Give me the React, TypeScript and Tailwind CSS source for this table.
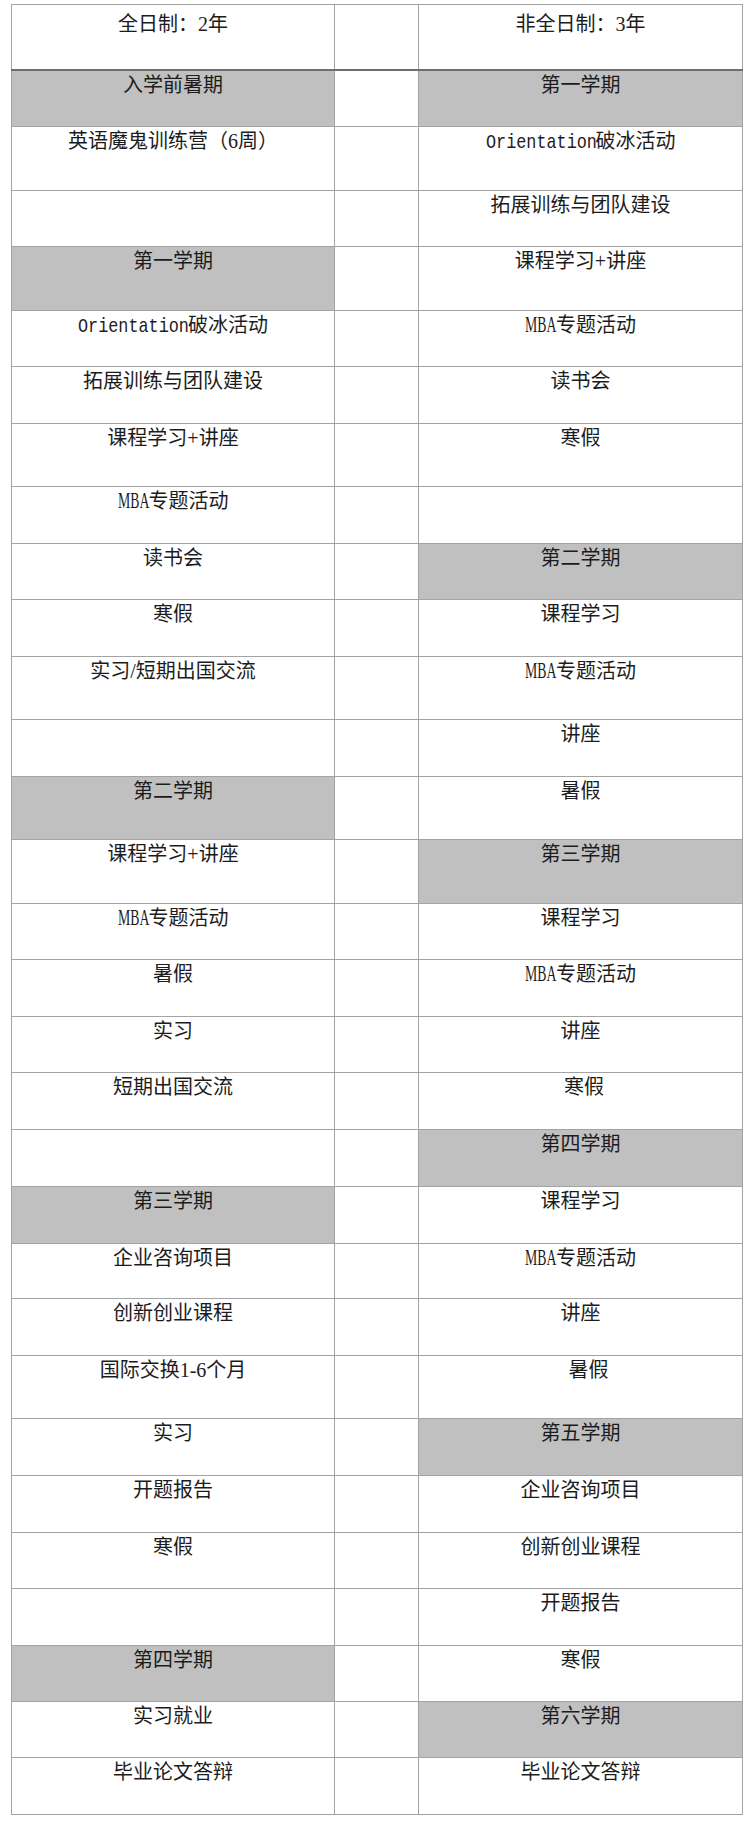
type Cell = { text: string; gray?: boolean; pad?: string };
type Row = { h: string; left: Cell; right: Cell };

const rows: Row[] = [
  { h: "h-[57px]", left: { text: "入学前暑期", gray: true }, right: { text: "第一学期", gray: true } },
  { h: "h-[64px]", left: { text: "英语魔鬼训练营（6周）" }, right: { text: "Orientation破冰活动" } },
  { h: "h-[56px]", left: { text: "" }, right: { text: "拓展训练与团队建设" } },
  { h: "h-[64px]", left: { text: "第一学期", gray: true }, right: { text: "课程学习+讲座" } },
  { h: "h-[56px]", left: { text: "Orientation破冰活动" }, right: { text: "MBA专题活动" } },
  { h: "h-[57px]", left: { text: "拓展训练与团队建设" }, right: { text: "读书会" } },
  { h: "h-[63px]", left: { text: "课程学习+讲座" }, right: { text: "寒假" } },
  { h: "h-[57px]", left: { text: "MBA专题活动" }, right: { text: "" } },
  { h: "h-[56px]", left: { text: "读书会" }, right: { text: "第二学期", gray: true } },
  { h: "h-[57px]", left: { text: "寒假" }, right: { text: "课程学习" } },
  { h: "h-[63px]", left: { text: "实习/短期出国交流" }, right: { text: "MBA专题活动" } },
  { h: "h-[57px]", left: { text: "" }, right: { text: "讲座" } },
  { h: "h-[63px]", left: { text: "第二学期", gray: true }, right: { text: "暑假" } },
  { h: "h-[64px]", left: { text: "课程学习+讲座" }, right: { text: "第三学期", gray: true } },
  { h: "h-[56px]", left: { text: "MBA专题活动" }, right: { text: "课程学习" } },
  { h: "h-[57px]", left: { text: "暑假" }, right: { text: "MBA专题活动" } },
  { h: "h-[56px]", left: { text: "实习" }, right: { text: "讲座" } },
  { h: "h-[57px]", left: { text: "短期出国交流" }, right: { text: "寒假", pad: "pl-[7px]" } },
  { h: "h-[57px]", left: { text: "" }, right: { text: "第四学期", gray: true } },
  { h: "h-[57px]", left: { text: "第三学期", gray: true }, right: { text: "课程学习" } },
  { h: "h-[55px]", left: { text: "企业咨询项目" }, right: { text: "MBA专题活动" } },
  { h: "h-[57px]", left: { text: "创新创业课程" }, right: { text: "讲座" } },
  { h: "h-[63px]", left: { text: "国际交换1-6个月" }, right: { text: "暑假", pad: "pl-[16px]" } },
  { h: "h-[57px]", left: { text: "实习" }, right: { text: "第五学期", gray: true } },
  { h: "h-[57px]", left: { text: "开题报告" }, right: { text: "企业咨询项目" } },
  { h: "h-[56px]", left: { text: "寒假" }, right: { text: "创新创业课程" } },
  { h: "h-[57px]", left: { text: "" }, right: { text: "开题报告" } },
  { h: "h-[56px]", left: { text: "第四学期", gray: true }, right: { text: "寒假" } },
  { h: "h-[56px]", left: { text: "实习就业" }, right: { text: "第六学期", gray: true } },
  { h: "h-[57px]", left: { text: "毕业论文答辩" }, right: { text: "毕业论文答辩" } },
];

// latin words in the source doc are half-width, narrow glyphs
function Label({ text }: { text: string }) {
  if (text.startsWith("Orientation")) {
    return (
      <>
        <span className="inline-block w-[110px] text-left align-baseline">
          <span className="inline-block origin-left scale-x-[0.8] font-['Liberation_Mono',monospace] text-[21px]">
            Orientation
          </span>
        </span>
        {text.slice("Orientation".length)}
      </>
    );
  }
  if (text.startsWith("MBA")) {
    return (
      <>
        <span className="inline-block w-[31px] text-left align-baseline">
          <span className="inline-block origin-left scale-x-[0.6] text-[23px]">MBA</span>
        </span>
        {text.slice(3)}
      </>
    );
  }
  return <>{text}</>;
}

function Td({ cell }: { cell: Cell }) {
  return (
    <td
      className={`border border-[#a3a3a3] align-top text-center pt-0 leading-[28px] whitespace-nowrap ${
        cell.gray ? "bg-[#c0c0c0]" : "bg-white"
      } ${cell.pad ?? ""}`}
    >
      <Label text={cell.text} />
    </td>
  );
}

export default function App() {
  return (
    <div className="w-[751px] min-h-[1822px] bg-white pt-[4px] pl-[11px] font-['Liberation_Serif','Noto_Sans_CJK_SC',serif] text-[20px] text-[#1c1c1c]">
      <table className="table-fixed border-collapse w-[731px]">
        <colgroup>
          <col className="w-[323px]" />
          <col className="w-[84px]" />
          <col className="w-[324px]" />
        </colgroup>
        <tbody>
          <tr className="h-[65px]">
            <td className="border border-[#a3a3a3] border-b-2 border-b-[#6e6e6e] align-top text-center pt-[5px] leading-[28px]">
              全日制：2年
            </td>
            <td className="border border-[#a3a3a3] border-b-2 border-b-[#6e6e6e]" />
            <td className="border border-[#a3a3a3] border-b-2 border-b-[#6e6e6e] align-top text-center pt-[5px] leading-[28px]">
              非全日制：3年
            </td>
          </tr>
          {rows.map((r, i) => (
            <tr key={i} className={r.h}>
              <Td cell={r.left} />
              <td className="border border-[#a3a3a3] bg-white" />
              <Td cell={r.right} />
            </tr>
          ))}
        </tbody>
      </table>
    </div>
  );
}
